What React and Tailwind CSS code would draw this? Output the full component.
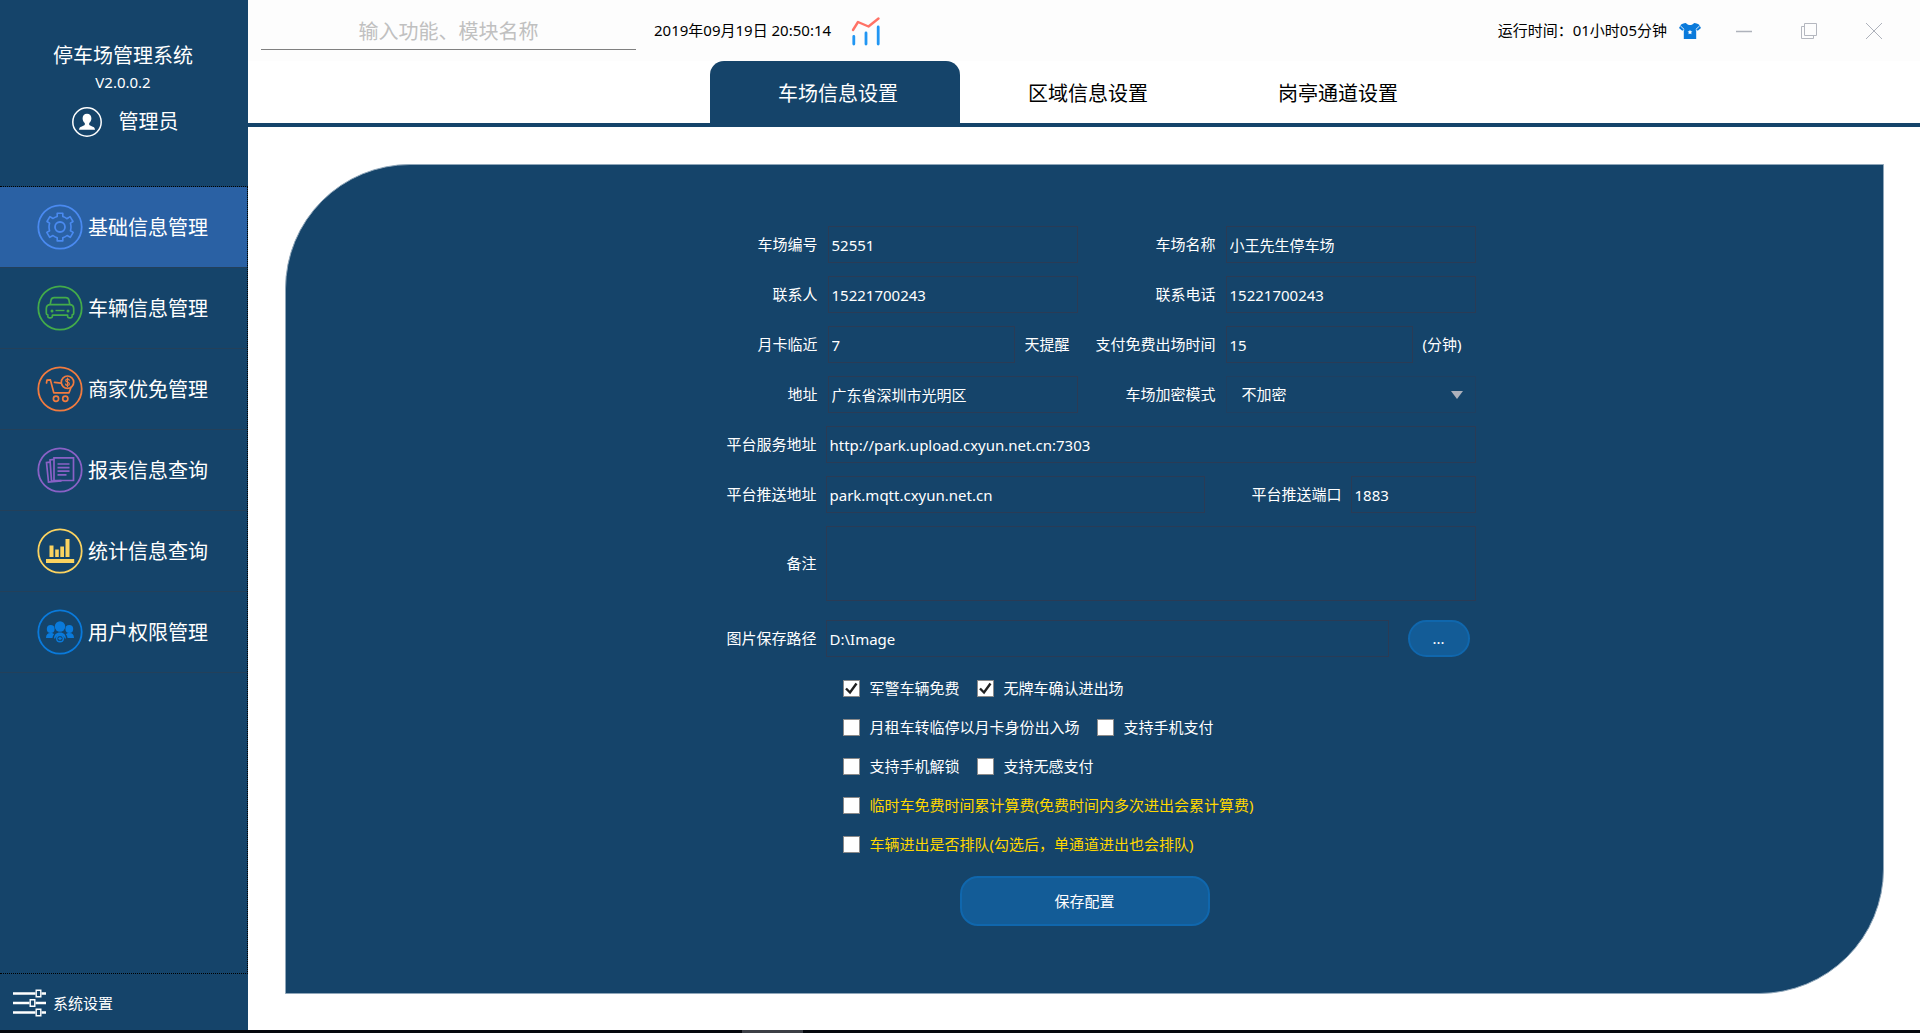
import { useState } from "react";

const GearIcon = () => (
  <svg viewBox="0 0 46 46" className="h-[46px] w-[46px] text-[#4a8af0]" fill="none" stroke="currentColor">
    <circle cx="23" cy="23" r="21.7" strokeWidth="1.8" />
    <path
      strokeWidth="1.6"
      strokeLinejoin="round"
      d="M20.2 9.2h5.6v3.3c1.5.5 2.8 1.2 4 2.2l1.6-1 .5-.3 1.2-.8 2.9 4.9-2.6 1.7c.4 1.2.6 2.4.6 3.8s-.2 2.5-.6 3.7l2.8 1.7-2.9 4.9-3.2-1.8c-1.3 1.1-2.7 1.9-4.3 2.3v3.1h-5.6v-3.1c-1.6-.4-3-1.2-4.2-2.3l-3.3 1.8-2.9-4.9 2.8-1.7c-.4-1.2-.6-2.4-.6-3.7s.2-2.6.6-3.8l-2.6-1.7 2.9-4.9 3.1 1.9c1.2-1 2.7-1.7 4.2-2.1z"
    />
    <circle cx="23" cy="23" r="5" strokeWidth="1.8" />
  </svg>
);

const CarIcon = () => (
  <svg viewBox="0 0 46 46" className="h-[46px] w-[46px] text-[#43ab4a]" fill="none" stroke="currentColor">
    <circle cx="23" cy="23" r="21.7" strokeWidth="1.8" />
    <g strokeWidth="1.7" strokeLinejoin="round">
      <path d="M13.2 19.5l.8-4.2c.4-1.8 1.4-2.6 3.2-2.6h11.6c1.8 0 2.8.8 3.2 2.6l.8 4.2" />
      <path d="M13.5 19.6h19c2.8 0 4.2 1.6 4.2 4.2v4.4c0 1-.5 1.6-1.5 1.7v1.4c0 1-.6 1.5-1.5 1.5h-1.6c-1 0-1.5-.5-1.5-1.5v-1.1H15.4v1.1c0 1-.6 1.5-1.5 1.5h-1.6c-1 0-1.5-.5-1.5-1.5v-1.4c-1-.1-1.5-.7-1.5-1.7v-4.4c0-2.6 1.4-4.2 4.2-4.2z" />
      <path d="M18.5 25.5h9" strokeWidth="1.4" />
    </g>
    <circle cx="15" cy="26" r="1.5" fill="currentColor" stroke="none" />
    <circle cx="31" cy="26" r="1.5" fill="currentColor" stroke="none" />
  </svg>
);

const CartIcon = () => (
  <svg viewBox="0 0 46 46" className="h-[46px] w-[46px] text-[#f17b3f]" fill="none" stroke="currentColor">
    <circle cx="23" cy="23" r="21.7" strokeWidth="1.8" />
    <g strokeWidth="1.7" strokeLinecap="round" strokeLinejoin="round">
      <path d="M9.5 17l.5-2.800 3.400-.3 3.400 12.900h15.200l2-5.300" />
      <path d="M17.500 16.300l6.500.8" />
      <circle cx="30.500" cy="16.200" r="6.200" />
      <path
        d="M32.300 14.100c-.3-.8-1-1.100-1.800-1.100-1 0-1.800.6-1.800 1.500 0 2.100 3.700 1.200 3.700 3.400 0 1-.8 1.500-1.900 1.500s-1.800-.5-2-1.400M30.500 12v8.400"
        strokeWidth="1.200"
      />
      <circle cx="19" cy="32.700" r="2.600" />
      <circle cx="28.300" cy="32.700" r="2.600" />
    </g>
  </svg>
);

const ReportIcon = () => (
  <svg viewBox="0 0 46 46" className="h-[46px] w-[46px] text-[#8961c6]" fill="none" stroke="currentColor">
    <circle cx="23" cy="23" r="21.7" strokeWidth="1.8" />
    <g strokeWidth="1.7">
      <path d="M17 10.800h19.500v22.700H17z" />
      <path d="M17 12.300l-4 .6 1.500 21.300 10-.7" />
      <path d="M13 15.200l-3.500.4 2 19.600 13-1.200" />
      <path d="M20.500 17h12M20.500 20.600h12M20.500 24.200h12M20.500 27.800h9" />
    </g>
  </svg>
);

const StatsIcon = () => (
  <svg viewBox="0 0 46 46" className="h-[46px] w-[46px] text-[#fbd360]" fill="none" stroke="currentColor">
    <circle cx="23" cy="23" r="21.7" strokeWidth="1.8" />
    <path
      fill="currentColor"
      stroke="none"
      d="M12.500 17.500h4v11.500h-4zM18.200 21.500h3.600v7.500h-3.600zM23.300 18.500h3.700v10.500h-3.700zM28.500 11h4v18h-4zM9 31h28.200v4H9z"
    />
  </svg>
);

const UsersIcon = () => (
  <svg viewBox="0 0 46 46" className="h-[46px] w-[46px] text-[#0a7adb]" fill="none" stroke="currentColor">
    <circle cx="23" cy="23" r="21.7" strokeWidth="1.8" />
    <g fill="currentColor" stroke="none">
      <circle cx="23" cy="17.500" r="5.200" />
      <circle cx="13.700" cy="20" r="3.900" />
      <circle cx="32.300" cy="20" r="3.900" />
      <path d="M9 29c0-3.200 1.600-5 4.700-5 1.500 0 2.700.4 3.500 1.200-1 1-1.600 2.300-1.700 3.800z" />
      <path d="M37 29c0-3.200-1.600-5-4.700-5-1.500 0-2.700.4-3.500 1.200 1 1 1.600 2.300 1.700 3.800z" />
      <path d="M17 29.500c.2-3.700 2.200-6 6-6s5.800 2.300 6 6h-1.200a5 5 0 0 0-9.600 0z" />
    </g>
    <circle cx="23" cy="29.500" r="3.300" strokeWidth="1.400" />
    <path d="M23 27.700v3.600M21.200 29.500h3.600" strokeWidth="1.300" />
  </svg>
);

const AvatarIcon = () => (
  <svg viewBox="0 0 30 30" className="h-[30px] w-[30px]" fill="none">
    <circle cx="15" cy="15" r="14.200" stroke="#fff" strokeWidth="1.500" />
    <path
      fill="#fff"
      d="M15 6.700c2.800 0 4.400 1.800 4.400 4.500 0 2-.9 3.900-2.200 4.900v1.600c0 .8 2.700 1.300 4.300 2.400 1 .7 1.400 1.600 1.500 2.700H7c.1-1.100.5-2 1.500-2.700 1.600-1.100 4.300-1.600 4.300-2.400v-1.600c-1.300-1-2.200-2.900-2.200-4.900 0-2.700 1.600-4.500 4.400-4.500z"
    />
  </svg>
);

const SlidersIcon = () => (
  <svg viewBox="0 0 34 28" className="h-7 w-[34px]" fill="none" stroke="#fff">
    <path strokeWidth="2.500" d="M0 4.500h22.500M28.500 4.500H33M0 14h16.500M22.500 14H33M0 23.500h22.500M28.500 23.500H33" />
    <path strokeWidth="1.400" d="M23.200 1.200h4.600v6.600h-4.600zM17.200 10.700h4.600v6.600h-4.600zM23.200 20.200h4.600v6.600h-4.600z" />
  </svg>
);

const ChartIcon = () => (
  <svg viewBox="0 0 30 30" className="h-[30px] w-[30px]" fill="none" strokeLinecap="round" strokeLinejoin="round">
    <path stroke="#ff7266" strokeWidth="2.400" d="M2 14l5-8 10.500 4.500L27.500 2.500" />
    <path stroke="#2196f3" strokeWidth="2.800" d="M2.800 20.500V28M15 17v11M27.200 11v17" />
  </svg>
);

const ShirtIcon = () => (
  <svg viewBox="0 0 22 18" className="h-[18px] w-[22px]">
    <path
      fill="#0a7adb"
      d="M7 1c1 1.400 2.400 2 4 2s3-.6 4-2c2.500.3 4.500 1 5.300 2l1.700 3-3.300 2.800-1.500-1.200V17H4.800V7.600L3.300 8.800 0 6l1.700-3C2.500 2 4.500 1.300 7 1z"
    />
    <path stroke="#fdfdfd" strokeWidth=".9" d="M1.300 3.800l4 3.800M20.700 3.800l-4 3.800" />
    <path
      fill="#fff"
      d="M11 7.700l.7 1.500 1.700.2-1.200 1.200.3 1.700-1.500-.8-1.500.8.3-1.700-1.200-1.200 1.700-.2z"
    />
  </svg>
);

const menus = [
  { label: "基础信息管理", icon: <GearIcon /> },
  { label: "车辆信息管理", icon: <CarIcon /> },
  { label: "商家优免管理", icon: <CartIcon /> },
  { label: "报表信息查询", icon: <ReportIcon /> },
  { label: "统计信息查询", icon: <StatsIcon /> },
  { label: "用户权限管理", icon: <UsersIcon /> },
];

const tabs = ["车场信息设置", "区域信息设置", "岗亭通道设置"];

const fieldStyle =
  "h-[37px] border border-[#2a3b55] bg-transparent pl-[3px] text-[15px] text-white outline-none";

const Sidebar = () => {
  const [active, setActive] = useState(0);

  return (
    <aside className="flex w-[248px] shrink-0 flex-col bg-[#15446a] text-white">
      <div className="flex h-[186px] flex-col items-center pr-[2px] pt-[41px]">
        <h1 className="text-xl leading-[30px]">停车场管理系统</h1>
        <p className="text-[15px] leading-[22px]">V2.0.0.2</p>
        <div className="mt-3 flex items-center gap-[17px] pl-1">
          <AvatarIcon />
          <span className="text-xl leading-[34px]">管理员</span>
        </div>
      </div>
      <nav className="flex-1 border-y border-r border-dotted border-black">
        {menus.map((menu, index) => (
          <a
            key={menu.label}
            href="#"
            onClick={(e) => {
              e.preventDefault();
              setActive(index);
            }}
            className={`flex h-[81px] items-center gap-[5px] border-b border-[#23405a] pl-[37px] text-xl ${
              active === index ? "bg-[#2a61a4]" : ""
            }`}
          >
            {menu.icon}
            <span className="pt-[2px]">{menu.label}</span>
          </a>
        ))}
      </nav>
      <button className="flex h-14 cursor-pointer items-center gap-[6px] pl-[13px] pt-[2px] text-[15px]">
        <SlidersIcon />
        系统设置
      </button>
    </aside>
  );
};

const Header = () => (
  <header className="flex h-[61px] items-center bg-[#fdfdfd] pl-[13px] pr-[14px] text-[15px] text-black">
    <input
      type="text"
      aria-label="搜索"
      placeholder="输入功能、模块名称"
      className="h-[39px] w-[375px] border-b border-[#808080] bg-transparent pt-[2px] text-center text-xl outline-none placeholder:text-[#c0c0c0]"
    />
    <time className="ml-[18px] mr-5 whitespace-nowrap">2019年09月19日 20:50:14</time>
    <ChartIcon />
    <span className="ml-auto mr-3 whitespace-nowrap">运行时间：01小时05分钟</span>
    <button aria-label="换肤" className="mr-[10px] cursor-pointer">
      <ShirtIcon />
    </button>
    <button aria-label="最小化" className="flex w-[65px] cursor-pointer justify-center">
      <svg viewBox="0 0 18 18" className="h-[18px] w-[18px]" stroke="#aeb2bb" strokeWidth="1.500">
        <path d="M1 9.500h16" />
      </svg>
    </button>
    <button aria-label="还原" className="flex w-[65px] cursor-pointer justify-center">
      <svg viewBox="0 0 18 18" className="h-[18px] w-[18px]" fill="none" stroke="#b4b7bf">
        <path d="M4.500 1.500h12v12h-12zM4.500 4.500h-3v12h12v-3" />
      </svg>
    </button>
    <button aria-label="关闭" className="flex w-[65px] cursor-pointer justify-center">
      <svg viewBox="0 0 18 18" className="h-[18px] w-[18px]" fill="none" stroke="#aeb2bb">
        <path d="M1 1l16 16M17 1L1 17" />
      </svg>
    </button>
  </header>
);

// Label on the left half of a row
const LeftLabel = ({ id, wide, children }) => (
  <label htmlFor={id} className={`shrink-0 text-right ${wide ? "w-[123px]" : "w-[124px]"}`}>
    {children}
  </label>
);

// Label that fills the space before the right field
const RightLabel = ({ id, children }) => (
  <label htmlFor={id} className="flex-1 text-right">
    {children}
  </label>
);

const CheckItem = ({ label, defaultChecked, warn }) => (
  <label className={`flex cursor-pointer items-center gap-[10px] ${warn ? "text-[#ffd700]" : ""}`}>
    <span className="relative h-[17px] w-[17px]">
      <input
        type="checkbox"
        defaultChecked={defaultChecked}
        className="peer block h-[17px] w-[17px] appearance-none border border-[#8a8a8a] bg-white"
      />
      <svg
        viewBox="0 0 17 17"
        className="pointer-events-none absolute inset-0 hidden h-[17px] w-[17px] peer-checked:block"
        fill="none"
        stroke="#212121"
        strokeWidth="2.400"
      >
        <path d="M3 8.500l4 4L13.500 3.500" />
      </svg>
    </span>
    {label}
  </label>
);

const ParkForm = () => (
  <form
    onSubmit={(e) => e.preventDefault()}
    className="mx-auto flex w-full max-w-[782px] flex-col gap-[13px] text-[15px] text-white"
  >
    <div className="flex items-center gap-[10px]">
      <LeftLabel id="parkNo">车场编号</LeftLabel>
      <input id="parkNo" defaultValue="52551" className={`${fieldStyle} w-[250px]`} />
      <RightLabel id="parkName">车场名称</RightLabel>
      <input id="parkName" defaultValue="小王先生停车场" className={`${fieldStyle} w-[250px]`} />
    </div>
    <div className="flex items-center gap-[10px]">
      <LeftLabel id="contact">联系人</LeftLabel>
      <input id="contact" defaultValue="15221700243" className={`${fieldStyle} w-[250px]`} />
      <RightLabel id="phone">联系电话</RightLabel>
      <input id="phone" defaultValue="15221700243" className={`${fieldStyle} w-[250px]`} />
    </div>
    <div className="flex items-center gap-[10px]">
      <LeftLabel id="cardDays">月卡临近</LeftLabel>
      <input id="cardDays" defaultValue="7" className={`${fieldStyle} w-[187px]`} />
      <span>天提醒</span>
      <RightLabel id="freeTime">支付免费出场时间</RightLabel>
      <div className="flex w-[250px] items-center gap-[10px]">
        <input id="freeTime" defaultValue="15" className={`${fieldStyle} w-[187px]`} />
        <span>(分钟)</span>
      </div>
    </div>
    <div className="flex items-center gap-[10px]">
      <LeftLabel id="address">地址</LeftLabel>
      <input id="address" defaultValue="广东省深圳市光明区" className={`${fieldStyle} w-[250px]`} />
      <RightLabel id="encrypt">车场加密模式</RightLabel>
      <div className="relative">
        <select
          id="encrypt"
          className="block h-[37px] w-[250px] appearance-none border border-[#1f3f60] bg-transparent pl-[15px] text-[15px] text-white outline-none"
        >
          <option>不加密</option>
        </select>
        <svg viewBox="0 0 12 8" className="pointer-events-none absolute right-[13px] top-[15px] h-2 w-3" fill="#adb1bb">
          <path d="M0 0h12L6 8z" />
        </svg>
      </div>
    </div>
    <div className="flex items-center gap-[9px]">
      <LeftLabel id="serviceUrl" wide>
        平台服务地址
      </LeftLabel>
      <input
        id="serviceUrl"
        defaultValue="http://park.upload.cxyun.net.cn:7303"
        className={`${fieldStyle} flex-1`}
      />
    </div>
    <div className="flex items-center gap-[9px]">
      <LeftLabel id="pushUrl" wide>
        平台推送地址
      </LeftLabel>
      <input id="pushUrl" defaultValue="park.mqtt.cxyun.net.cn" className={`${fieldStyle} w-[379px]`} />
      <RightLabel id="pushPort">平台推送端口</RightLabel>
      <input id="pushPort" defaultValue="1883" className={`${fieldStyle} w-[125px]`} />
    </div>
    <div className="flex items-center gap-[9px]">
      <LeftLabel id="remark" wide>
        备注
      </LeftLabel>
      <textarea
        id="remark"
        className="h-[75px] flex-1 resize-none border border-[#2a3b55] bg-transparent p-1 outline-none"
      />
    </div>
    <div className="mt-[6px] flex items-center gap-[9px]">
      <LeftLabel id="imagePath" wide>
        图片保存路径
      </LeftLabel>
      <input id="imagePath" defaultValue="D:\Image" className={`${fieldStyle} w-[563px]`} />
      <button
        type="button"
        aria-label="选择路径"
        className="ml-[10px] h-[37px] w-[62px] cursor-pointer rounded-full border-2 border-[#1067ad] bg-[#135c97]"
      >
        ...
      </button>
    </div>

    <div className="mt-[7px] flex flex-col gap-[17px] pl-[149px] leading-[22px]">
      <div className="flex gap-[17px]">
        <CheckItem label="军警车辆免费" defaultChecked />
        <CheckItem label="无牌车确认进出场" defaultChecked />
      </div>
      <div className="flex gap-[17px]">
        <CheckItem label="月租车转临停以月卡身份出入场" />
        <CheckItem label="支持手机支付" />
      </div>
      <div className="flex gap-[17px]">
        <CheckItem label="支持手机解锁" />
        <CheckItem label="支持无感支付" />
      </div>
      <CheckItem label="临时车免费时间累计算费(免费时间内多次进出会累计算费)" warn />
      <CheckItem label="车辆进出是否排队(勾选后，单通道进出也会排队)" warn />
    </div>

    <button
      type="submit"
      className="mx-auto mt-2 h-[50px] w-[250px] cursor-pointer rounded-[18px] border-2 border-[#1067ad] bg-[#135c97]"
    >
      保存配置
    </button>
  </form>
);

export default function App() {
  const [tab, setTab] = useState(0);

  return (
    <div className="flex min-h-screen flex-col bg-white font-['Noto_Sans','Noto_Sans_CJK_SC',sans-serif]">
      <div className="flex flex-1">
        <Sidebar />
        <main className="flex min-w-0 flex-1 flex-col">
          <Header />
          <div className="flex justify-center border-b-4 border-[#15446a] pl-[2px]">
            {tabs.map((name, index) => (
              <button
                key={name}
                onClick={() => setTab(index)}
                className={`h-[62px] w-[250px] cursor-pointer rounded-t-[14px] pl-[6px] pt-1 text-xl ${
                  tab === index ? "bg-[#15446a] text-white" : "text-black"
                }`}
              >
                {name}
              </button>
            ))}
          </div>
          <section className="mb-9 ml-[37px] mr-9 mt-[37px] flex-1 rounded-br-[125px] rounded-tl-[125px] border border-[#8fa6b9] bg-[#15446a] pt-[61px]">
            <ParkForm />
          </section>
        </main>
      </div>
      <footer className="flex h-[3px] justify-center bg-[#05080d]">
        <div className="mr-[376px] w-[61px] bg-[#3c3f45]"></div>
      </footer>
    </div>
  );
}
